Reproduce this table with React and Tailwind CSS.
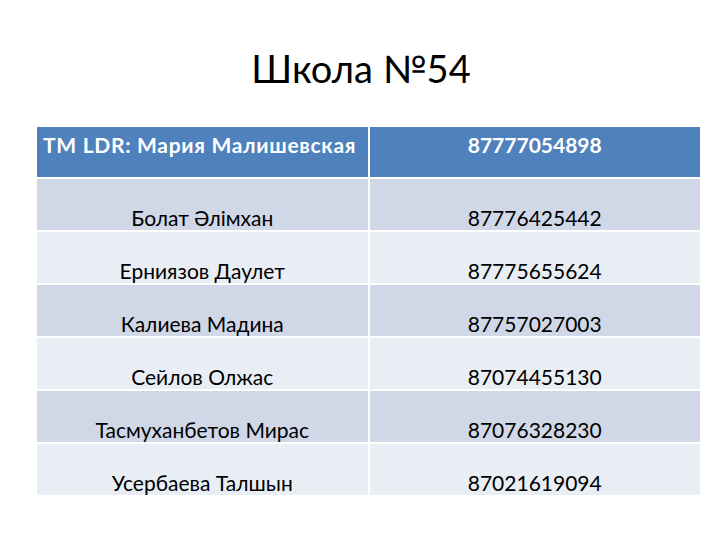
const rows = [
  ['Болат Әлімхан', '87776425442'],
  ['Ерниязов Даулет', '87775655624'],
  ['Калиева Мадина', '87757027003'],
  ['Сейлов Олжас', '87074455130'],
  ['Тасмуханбетов Мирас', '87076328230'],
  ['Усербаева Талшын', '87021619094'],
];

export default function App() {
  return (
    <div
      className="w-[720px] h-[540px] bg-white text-black overflow-hidden"
      style={{ fontFamily: 'Lato, "Noto Sans", sans-serif' }}
    >
      <div className="h-[127px] flex items-center justify-center pt-[9px]">
        <h1 className="text-[38px] leading-none pl-[2px]">Школа №54</h1>
      </div>

      <div className="ml-[37px] w-[663px] grid grid-cols-2 gap-x-[2px] gap-y-[2px] text-[21px] leading-[1.2]">
        <div className="h-[50px] bg-[#4f81bd] text-white font-bold pl-[6px] pt-[5px] whitespace-nowrap tracking-[0.7px]">
          TM LDR: Мария Малишевская
        </div>
        <div className="h-[50px] bg-[#4f81bd] text-white font-bold text-center pt-[5px]">
          87777054898
        </div>
        {rows.map(([name, phone], i) => (
          <>
            <div
              key={name}
              className={`h-[51px] flex items-end justify-center ${i % 2 === 0 ? 'bg-[#d0d8e8]' : 'bg-[#e9edf4]'}`}
            >
              {name}
            </div>
            <div
              key={phone}
              className={`h-[51px] flex items-end justify-center ${i % 2 === 0 ? 'bg-[#d0d8e8]' : 'bg-[#e9edf4]'}`}
            >
              {phone}
            </div>
          </>
        ))}
      </div>
    </div>
  );
}
